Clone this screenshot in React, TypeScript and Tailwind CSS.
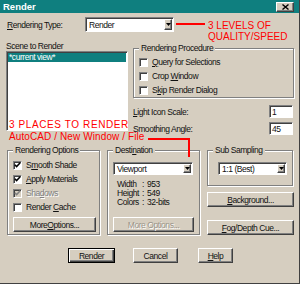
import React from 'react';

const raised =
  'bg-[#d6cec0] border border-t-white border-l-white border-r-[#404040] border-b-[#404040] shadow-[inset_-1px_-1px_0_#808080]';
const sunken =
  'bg-white border border-t-[#808080] border-l-[#808080] border-b-white border-r-white shadow-[inset_1px_1px_0_#404040]';

function Combo({ value, className = '' }: { value: string; className?: string }) {
  return (
    <div className={`flex ${sunken} ${className}`}>
      <span className="flex flex-1 items-center pl-[3px]">{value}</span>
      <span className={`mr-[1px] mt-[1px] mb-[1px] flex w-[8px] items-center justify-center ${raised}`}>
        <svg width="5" height="3" viewBox="0 0 5 3">
          <polygon points="0,0 5,0 2.5,3" fill="#000" />
        </svg>
      </span>
    </div>
  );
}

function Group({ title, className = '', children }: { title: React.ReactNode; className?: string; children?: React.ReactNode }) {
  return (
    <div className={`border border-[#808080] shadow-[inset_1px_1px_0_#fff,1px_1px_0_#fff] ${className}`}>
      <div className="-mt-[6px] ml-[5px] h-[10px] w-fit bg-[#d6cec0] px-[2px]">{title}</div>
      {children}
    </div>
  );
}

function Check({ label, checked = false, disabled = false }: { label: React.ReactNode; checked?: boolean; disabled?: boolean }) {
  return (
    <div className="flex h-[14px] items-center gap-[4px]">
      <span
        className={`flex h-[9px] w-[9px] items-center justify-center border border-t-[#808080] border-l-[#808080] border-b-white border-r-white shadow-[inset_1px_1px_0_#404040] ${
          disabled ? 'bg-[#d6cec0]' : 'bg-white'
        }`}
      >
        {checked && (
          <svg width="7" height="6" viewBox="0 0 7 6">
            <path d="M0.8 2.8 L2.6 4.6 L6.2 0.8" fill="none" stroke={disabled ? '#808080' : '#000'} strokeWidth="1.5" />
          </svg>
        )}
      </span>
      <span className={disabled ? 'text-[#808080] [text-shadow:1px_1px_0_#fff]' : ''}>{label}</span>
    </div>
  );
}

function Button({ children, className = '', isDefault = false, disabled = false }: { children: React.ReactNode; className?: string; isDefault?: boolean; disabled?: boolean }) {
  const frame = isDefault
    ? 'bg-[#d6cec0] border border-black shadow-[inset_1px_1px_0_#fff,inset_-1px_-1px_0_#404040,inset_-2px_-2px_0_#808080]'
    : raised;
  return (
    <div
      className={`flex h-[15px] items-center justify-center ${frame} ${
        disabled ? 'text-[#9a9488] [text-shadow:1px_1px_0_#fff]' : ''
      } ${className}`}
    >
      {children}
    </div>
  );
}

function Field({ value }: { value: string }) {
  return <div className={`mr-[1px] flex h-[13px] w-[24px] items-center pl-[2px] ${sunken}`}>{value}</div>;
}

export default function App() {
  return (
    <div className="relative h-[284px] w-[300px] overflow-hidden border-b border-r border-b-[#404040] border-r-[#404040] bg-[#d6cec0] font-['Liberation_Sans',Arial,sans-serif] text-[8.5px] leading-[10px] tracking-[-0.45px] text-[#111]">
      {/* title bar */}
      <div className="flex h-[13px] items-center justify-between bg-[#0f7f7f] pl-[3px] pr-[5px]">
        <span className="text-[9.5px] font-bold leading-[13px] tracking-normal text-white">Render</span>
        <span className={`flex h-[10px] w-[18px] items-center justify-center ${raised}`}>
          <svg width="7" height="6" viewBox="0 0 7 6">
            <path d="M0.5 0.5 L6.5 5.5 M6.5 0.5 L0.5 5.5" stroke="#000" strokeWidth="1.4" />
          </svg>
        </span>
      </div>

      <div className="pl-[6px] pr-[5px]">
        <div className="mt-[4px] flex h-[15px] items-center">
          <span className="w-[79px] pl-[1px]">
            <u>R</u>endering Type:
          </span>
          <Combo value="Render" className="h-[15px] w-[89px]" />
        </div>

        <div className="mt-[9px] flex items-start gap-[5px]">
          <div className="w-[122px]">
            <div className="h-[10px]">Scene to Render</div>
            <div className={`h-[80px] p-[1px] ${sunken}`}>
              <div className="h-[9px] bg-[#0f7f7f] pl-[1px] leading-[9px] text-white">*current view*</div>
            </div>
          </div>

          <div className="w-[161px]">
            <Group title="Rendering Procedure" className="mt-[7px] h-[50px]">
              <div className="mt-[2px] pl-[5px]">
                <Check label={<><u>Q</u>uery for Selections</>} />
                <Check label={<>Crop <u>W</u>indow</>} />
                <Check label={<>S<u>k</u>ip Render Dialog</>} />
              </div>
            </Group>
            <div className="mt-[7px] flex h-[13px] items-center justify-between">
              <span>
                <u>L</u>ight Icon Scale:
              </span>
              <Field value="1" />
            </div>
            <div className="mt-[4px] flex h-[13px] items-center justify-between">
              <span>Smoothing Angle:</span>
              <Field value="45" />
            </div>
          </div>
        </div>

        <div className="mt-[15px] flex items-start">
          <Group title="Rendering Options" className="ml-[1px] h-[85px] w-[93px]">
            <div className="mt-[3px] pl-[5px]">
              <Check checked label={<>S<u>m</u>ooth Shade</>} />
              <Check checked label={<><u>A</u>pply Materials</>} />
              <Check checked disabled label={<>Sha<u>d</u>ows</>} />
              <Check label={<>Render <u>C</u>ache</>} />
            </div>
            <Button className="ml-[5px] mt-[3px] w-[83px]">
              More <u>O</u>ptions...
            </Button>
          </Group>

          <Group title={<>Desti<u>n</u>ation</>} className="ml-[7px] h-[85px] w-[93px]">
            <Combo value="Viewport" className="ml-[5px] mt-[7px] h-[13px] w-[80px]" />
            <div className="mt-[5px] pl-[9px] leading-[9px]">
              <div className="flex">
                <span className="w-[25px]">Width</span>
                <span className="w-[5px]">:</span>
                <span>953</span>
              </div>
              <div className="flex">
                <span className="w-[25px]">Height</span>
                <span className="w-[5px]">:</span>
                <span>549</span>
              </div>
              <div className="flex">
                <span className="w-[25px]">Colors</span>
                <span className="w-[5px]">:</span>
                <span>32-bits</span>
              </div>
            </div>
            <Button disabled className="ml-[5px] mt-[10px] w-[81px]">
              More Options...
            </Button>
          </Group>

          <div className="ml-[7px] w-[87px]">
            <Group title="Sub Sampling" className="h-[36px] w-[86px]">
              <Combo value="1:1 (Best)" className="ml-[10px] mt-[7px] h-[13px] w-[69px]" />
            </Group>
            <Button className="mt-[6px] w-[87px]">
              <u>B</u>ackground...
            </Button>
            <Button className="mt-[13px] w-[87px]">
              <u>F</u>og/Depth Cue...
            </Button>
          </div>
        </div>

        <div className="mt-[13px] flex pl-[62px]">
          <Button isDefault className="w-[47px]">
            Render
          </Button>
          <Button className="ml-[18px] w-[45px]">Cancel</Button>
          <Button className="ml-[20px] w-[35px]">
            <u>H</u>elp
          </Button>
        </div>
      </div>

      {/* red annotations */}
      <div className="absolute left-[176px] top-[23px] h-[2px] w-[29px] bg-[#ff0000]" />
      <div className="absolute left-[208px] top-[20px] text-[10px] leading-[11px] tracking-normal text-[#ff0000]">
        3 LEVELS OF
        <br />
        QUALITY/SPEED
      </div>
      <div className="absolute left-[9px] top-[119px] text-[10px] leading-[12px] tracking-normal text-[#ff0000]">
        <span className="tracking-[0.6px]">3 PLACES TO RENDER</span>
        <br />
        <span className="tracking-[0.1px]">AutoCAD / New Window / File</span>
      </div>
      <div className="absolute left-[148px] top-[138px] h-[2px] w-[42px] bg-[#ff0000]" />
      <div className="absolute left-[188px] top-[138px] h-[19px] w-[2px] bg-[#ff0000]" />
    </div>
  );
}
